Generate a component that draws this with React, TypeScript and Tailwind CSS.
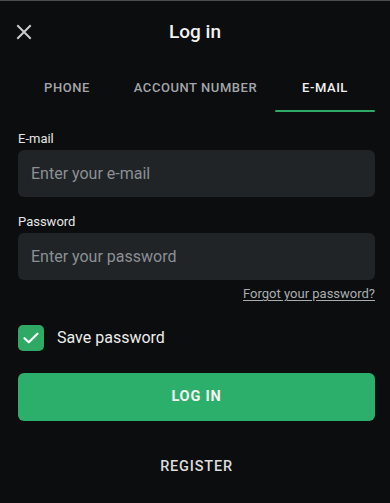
import React, { useState } from 'react';

const tabs = [
  { label: 'PHONE', width: 'w-[98px]' },
  { label: 'ACCOUNT NUMBER', width: 'w-[159px]' },
  { label: 'E-MAIL', width: 'w-[100px]' },
];

const App: React.FC = () => {
  const [active, setActive] = useState(2);
  const [save, setSave] = useState(true);

  return (
    <div className="w-[390px] h-[503px] bg-[#0b0d0e] border-t border-[#4a4d50] text-white font-['Roboto',sans-serif] overflow-hidden">
      {/* Header */}
      <div className="relative h-[63px] flex items-center justify-center">
        <button className="absolute left-[15px] top-[22px] w-[18px] h-[18px] flex items-center justify-center text-[#c9cccf]">
          <svg width="16" height="16" viewBox="0 0 16 16" fill="none" stroke="currentColor" strokeWidth="2" strokeLinecap="square">
            <path d="M2 2L14 14M14 2L2 14" />
          </svg>
        </button>
        <h1 className="text-[19px] font-medium text-[#f2f2f2] mt-[-1px]">Log in</h1>
      </div>

      {/* Tabs */}
      <div className="flex pl-[18px] pr-[15px] h-[48px]">
        {tabs.map((t, i) => (
          <button
            key={t.label}
            onClick={() => setActive(i)}
            className={`${t.width} shrink-0 relative flex items-center justify-center text-[13px] font-medium tracking-[0.55px] ${
              active === i ? 'text-[#f0f0f0]' : 'text-[#a2a6aa]'
            }`}
          >
            {t.label}
            {active === i && <span className="absolute left-0 right-0 bottom-0 h-[2px] rounded-full bg-[#2eaa64]" />}
          </button>
        ))}
      </div>

      {/* Form */}
      <div className="pl-[18px] pr-[15px] pt-[19px]">
        <label className="block text-[13px] text-[#e6e6e6] leading-[15px] mb-[4px]">E-mail</label>
        <input
          placeholder="Enter your e-mail"
          className="w-full h-[47px] rounded-[6px] bg-[#202427] px-[13px] text-[16px] text-white placeholder-[#8b9094] outline-none"
        />

        <label className="block text-[13px] text-[#e6e6e6] leading-[15px] mt-[17px] mb-[4px]">Password</label>
        <input
          type="password"
          placeholder="Enter your password"
          className="w-full h-[47px] rounded-[6px] bg-[#202427] px-[13px] text-[16px] text-white placeholder-[#8b9094] outline-none"
        />

        <div className="flex justify-end mt-[7px]">
          <a className="text-[13px] text-[#a9adb0] underline underline-offset-2 leading-[14px]">Forgot your password?</a>
        </div>

        <label className="flex items-center gap-[13px] mt-[24px] cursor-pointer" onClick={() => setSave(!save)}>
          <span className={`w-[26px] h-[26px] rounded-[5px] flex items-center justify-center ${save ? 'bg-[#2eaa64]' : 'border-2 border-[#555]'}`}>
            {save && (
              <svg width="16" height="12" viewBox="0 0 16 12" fill="none" stroke="white" strokeWidth="2.2" strokeLinecap="round" strokeLinejoin="round">
                <path d="M1.5 6.2L5.8 10.3L14.5 1.7" />
              </svg>
            )}
          </span>
          <span className="text-[16px] text-[#ececec]">Save password</span>
        </label>

        <button className="w-full h-[48px] mt-[22px] rounded-[6px] bg-[#2daf6c] text-[14.5px] font-bold tracking-[0.8px] text-[#f5f5f5]">
          LOG IN
        </button>

        <button className="w-full h-[48px] mt-[22px] text-[14.5px] font-medium tracking-[0.8px] text-[#dcdcdc]">
          REGISTER
        </button>
      </div>
    </div>
  );
};

export default App;
